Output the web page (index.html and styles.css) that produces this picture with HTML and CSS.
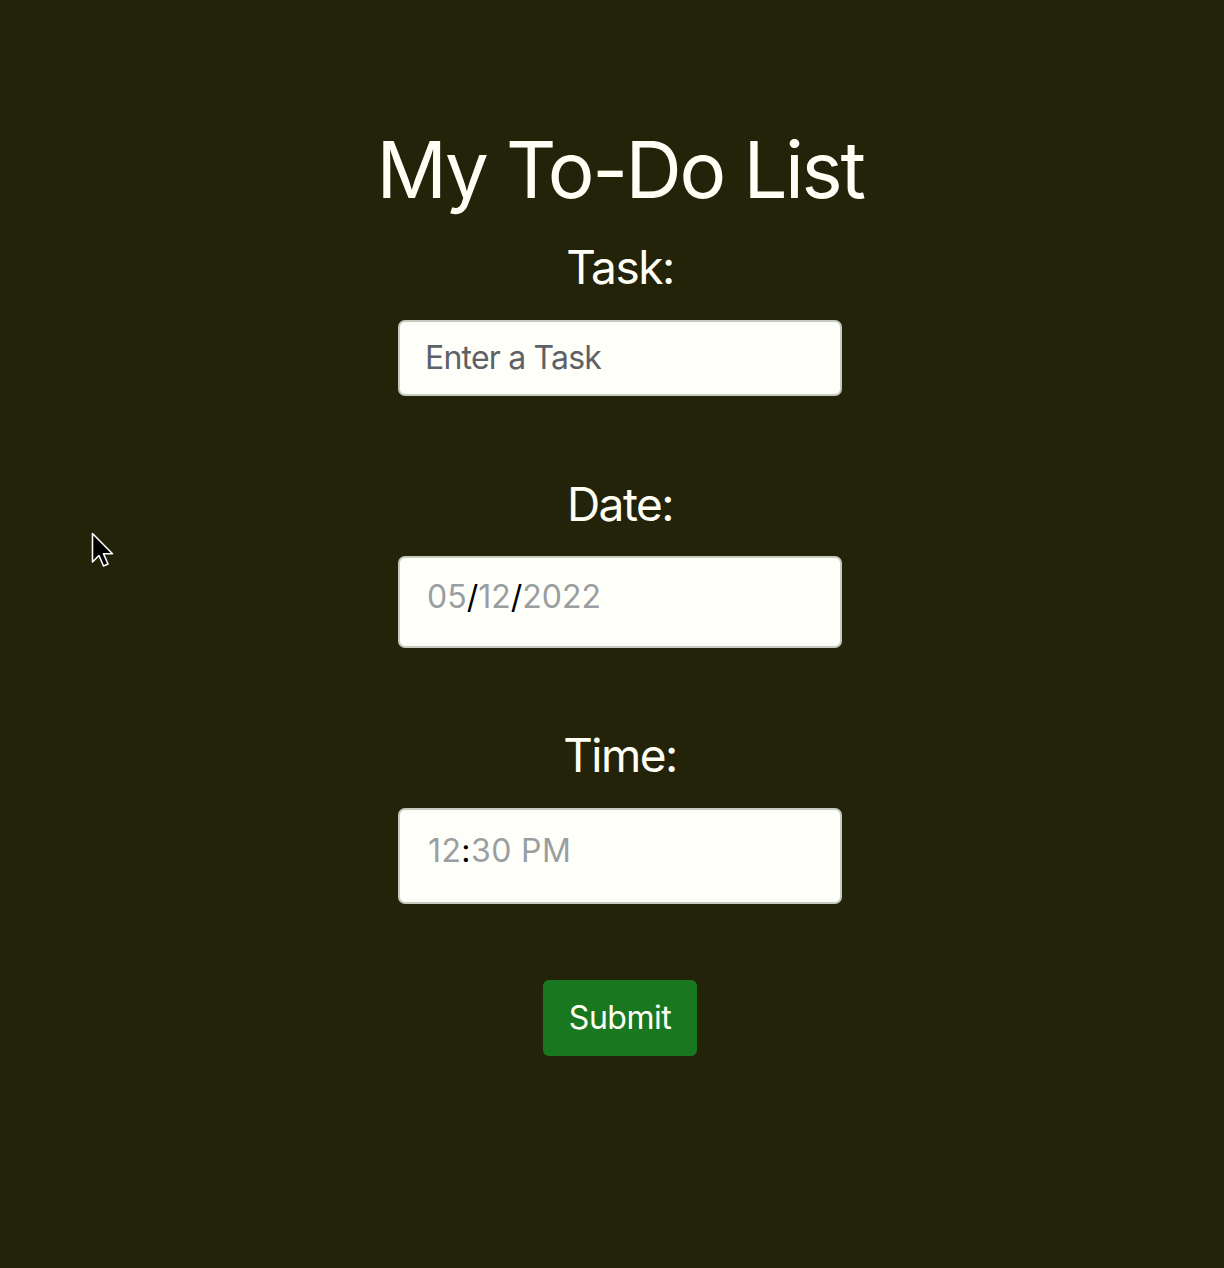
FILE: index.html
```html
<!DOCTYPE html>
<html lang="en">
<head>
<meta charset="utf-8">
<title>My To-Do List</title>
<link rel="stylesheet" href="styles.css">
</head>
<body>
<main class="todo">
  <h1 class="title">My To-Do List</h1>
  <form class="form">
    <div class="field field-task">
      <label class="label" for="task">Task:</label>
      <input class="input input-task" id="task" type="text" placeholder="Enter a Task">
    </div>
    <div class="field field-date">
      <label class="label">Date:</label>
      <div class="input input-date"><span class="seg">05</span><span class="sep">/</span><span class="seg">12</span><span class="sep">/</span><span class="seg">2022</span></div>
    </div>
    <div class="field field-time">
      <label class="label">Time:</label>
      <div class="input input-time"><span class="seg">12</span><span class="sep">:</span><span class="seg">30 PM</span></div>
    </div>
    <button class="submit" type="button">Submit</button>
  </form>
</main>
<svg class="cursor" width="26" height="38" viewBox="0 0 26 38" aria-hidden="true">
  <path d="M1.5 1.5 L1.5 30 L8 23.5 L12.5 34 L17 32 L12.5 21.8 L21.5 21.8 Z" fill="#000" stroke="#fff" stroke-width="1.6" stroke-linejoin="round"/>
</svg>
</body>
</html>
```
FILE: styles.css
```css
html, body {
  margin: 0;
  padding: 0;
}
body {
  background: #23230a;
  color: #fffff6;
  font-family: Inter, "Noto Sans", sans-serif;
  min-height: 1268px;
  position: relative;
}
.todo {
  display: flex;
  flex-direction: column;
  align-items: center;
  padding-top: 123px;
  padding-left: 16px;
}
.title {
  margin: 0;
  font-size: 78px;
  font-weight: 400;
  line-height: 1.2;
  letter-spacing: -2.4px;
}
.form {
  display: flex;
  flex-direction: column;
  align-items: center;
  margin-top: 23px;
}
.field {
  display: flex;
  flex-direction: column;
  align-items: center;
}
.field-date { margin-top: 81px; }
.field-time { margin-top: 80px; }
.label {
  font-size: 46px;
  line-height: 1.2;
  margin-bottom: 25px;
  letter-spacing: -1.5px;
}
.field-date .label { margin-bottom: 24px; }
.input {
  box-sizing: border-box;
  width: 444px;
  border: 2px solid #c6c9bd;
  border-radius: 7px;
  background: #fffffa;
  font-family: Inter, "Noto Sans", sans-serif;
  font-size: 32px;
  line-height: 1.2;
  color: #9a9ea1;
  padding: 0 25px;
  outline: none;
}
.input-task {
  height: 76px;
  color: #5e6166;
  letter-spacing: -0.8px;
}
.input-task::placeholder {
  color: #5e6166;
}
.input-date {
  height: 92px;
  padding-top: 20px;
  padding-left: 27px;
}
.input-time {
  height: 96px;
  padding-top: 22px;
  padding-left: 28px;
  letter-spacing: 0.4px;
}
.seg { color: #9a9ea1; }
.sep { color: #000; }
.submit {
  margin-top: 76px;
  width: 154px;
  height: 76px;
  border: 0;
  border-radius: 6px;
  background: #19781f;
  color: #fffff6;
  font-family: Inter, "Noto Sans", sans-serif;
  font-size: 32px;
  line-height: 1;
  letter-spacing: -0.5px;
  padding: 0;
}
.cursor {
  position: absolute;
  left: 91px;
  top: 532px;
}
```
